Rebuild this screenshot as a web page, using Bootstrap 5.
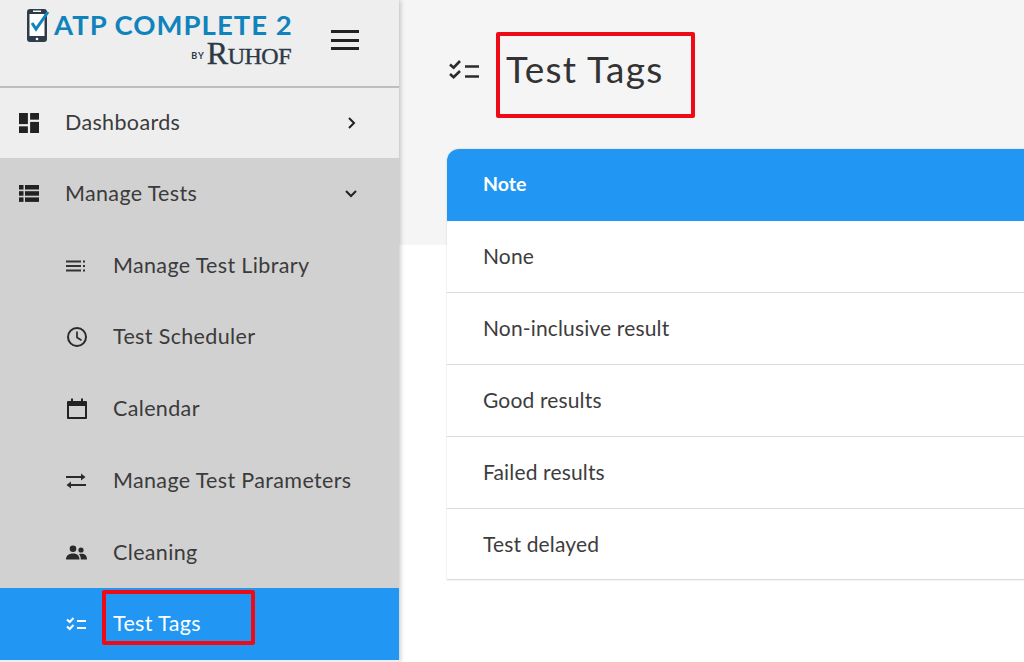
<!DOCTYPE html>
<html lang="en">
<head>
<meta charset="utf-8">
<title>Test Tags</title>
<link href="https://cdn.jsdelivr.net/npm/bootstrap@5.3.0/dist/css/bootstrap.min.css" rel="stylesheet">
<style>
html,body{height:100%;overflow:hidden}
body{font-family:"Lato","Noto Sans",sans-serif;color:#333;background:#fff;width:1024px;height:662px;position:relative}
.shell{height:662px}
.side{width:399px;flex:none;background:#eee;box-shadow:1px 0 5px rgba(0,0,0,.25);z-index:2;height:662px;overflow:hidden}
.brandbar{height:88px;flex:none;border-bottom:2px solid #bdbdbd;padding-left:24px;padding-right:40px}
.brandmark{margin-top:7px;width:272px}
.logotop{font-weight:700;font-size:27.5px;line-height:28px;color:#1083bd;letter-spacing:1px;white-space:nowrap;margin-left:2px}
.logotop svg{margin-right:1px}
.logosub{color:#2c3a47;line-height:20px;padding-right:5px;justify-content:flex-end;white-space:nowrap}
.by{font-size:9px;font-weight:700;letter-spacing:1px;margin-right:2px;margin-top:3px}
.ruhof{font-family:"Liberation Serif",serif;font-size:24px;font-weight:400;letter-spacing:-.5px;-webkit-text-stroke:.4px #2c3a47}
.ruhof b{font-size:32px;font-weight:400}
.burger{width:28px;height:20px;border-top:3px solid #222;border-bottom:3px solid #222;position:relative;margin-top:-6px;background:linear-gradient(#222,#222) center/100% 3px no-repeat}
.menurow{height:71.7px;flex:none;font-size:21.5px;letter-spacing:.35px;color:#3b3b3b;padding-left:19px;padding-right:41px;white-space:nowrap;line-height:1}
.firstrow{height:70px}
.menurow .glyph{width:46px;flex:none;display:flex;align-items:center}
.subrow{padding-left:66px}
.subrow .glyph{width:47px}
.tier{background:#d1d1d1;flex:none}
.isactive{background:#2196f3;color:#fff;height:72px}
.mainpane{flex:1;min-width:0;background:linear-gradient(#f5f5f5 245px,#fff 245px);padding-left:48px;overflow:hidden}
.headline{height:149px;padding-bottom:8px}
.headline svg{margin-left:2px}
.headline h1{font-size:37px;font-weight:400;color:#333;margin:-2px 0 0 26px;letter-spacing:1.3px}
.tagbox{width:640px;background:#fff;border-radius:12px 0 0 0;overflow:hidden;box-shadow:0 0 2px rgba(0,0,0,.18)}
.taghead{height:72px;background:#2196f3;color:#fff;font-size:19.5px;font-weight:700;padding-left:36px;padding-bottom:2px}
.tagrow{height:71.9px;padding-left:36px;padding-bottom:1px;font-size:21px;letter-spacing:.15px;color:#3d3d3d;border-bottom:1px solid #dcdcdc}
.annot{position:absolute;border:4px solid #ef0b16;border-radius:2px;z-index:5;pointer-events:none}
.annot-a{left:496px;top:32px;width:199px;height:86px}
.annot-b{left:102px;top:590px;width:153px;height:55px}
svg{display:block}
</style>
</head>
<body>
<div class="d-flex shell">
  <aside class="side d-flex flex-column">
    <div class="brandbar d-flex justify-content-between align-items-center">
      <div class="d-flex align-self-start brandmark">
        <div class="flex-grow-1">
          <div class="logotop d-flex align-items-center">
            <svg width="27" height="36" viewBox="0 0 27 36"><rect x="1" y="2" width="20" height="33" rx="3" fill="#2f3d4b"/><rect x="3.500" y="7" width="15" height="22" fill="#fff"/><circle cx="11" cy="32" r="1.300" fill="#fff"/><rect x="7" y="3.500" width="8" height="1.500" fill="#fff"/><path d="M6 16l4 6L22 5" fill="none" stroke="#1083bd" stroke-width="3"/></svg>
            <span>ATP COMPLETE 2</span>
          </div>
          <div class="logosub d-flex align-items-center"><span class="by">BY</span><span class="ruhof"><b>R</b>UHOF</span></div>
        </div>
      </div>
      <div class="burger"></div>
    </div>

    <div class="menurow firstrow d-flex align-items-center">
      <span class="glyph"><svg width="20" height="20" viewBox="0 0 18 18" fill="#222"><rect x="0" y="0" width="8" height="10"/><rect x="0" y="12" width="8" height="6"/><rect x="10" y="0" width="8" height="6"/><rect x="10" y="8" width="8" height="10"/></svg></span>
      <span class="flex-grow-1">Dashboards</span>
      <svg width="12" height="14" viewBox="0 0 12 14"><path d="M3 2l5 5-5 5" fill="none" stroke="#222" stroke-width="2"/></svg>
    </div>

    <div class="tier">
      <div class="menurow d-flex align-items-center">
        <span class="glyph"><svg width="20" height="17" viewBox="0 0 20 17" fill="#222"><rect x="0" y="0" width="4.500" height="4.500"/><rect x="6" y="0" width="14" height="4.500"/><rect x="0" y="6.200" width="4.500" height="4.500"/><rect x="6" y="6.200" width="14" height="4.500"/><rect x="0" y="12.400" width="4.500" height="4.500"/><rect x="6" y="12.400" width="14" height="4.500"/></svg></span>
        <span class="flex-grow-1">Manage Tests</span>
        <svg width="14" height="12" viewBox="0 0 14 12"><path d="M2 3l5 5 5-5" fill="none" stroke="#222" stroke-width="2"/></svg>
      </div>
      <div class="menurow subrow d-flex align-items-center">
        <span class="glyph"><svg width="20" height="12" viewBox="0 0 20 12" fill="#333"><rect y="0.500" width="15" height="2"/><rect y="5" width="15" height="2"/><rect y="9.500" width="15" height="2"/><rect x="17" y="0.500" width="2" height="2"/><rect x="17" y="5" width="2" height="2"/><rect x="17" y="9.500" width="2" height="2"/></svg></span>
        <span>Manage Test Library</span>
      </div>
      <div class="menurow subrow d-flex align-items-center">
        <span class="glyph"><svg width="22" height="22" viewBox="0 0 22 22" fill="none" stroke="#2a2a2a" stroke-width="2"><circle cx="11" cy="11" r="9"/><path d="M11 5.500V11.500l4.500 2.700" stroke-width="1.700"/></svg></span>
        <span>Test Scheduler</span>
      </div>
      <div class="menurow subrow d-flex align-items-center">
        <span class="glyph"><svg width="22" height="22" viewBox="0 0 22 22"><path d="M2 3h18a1 1 0 0 1 1 1v16a1 1 0 0 1-1 1H2a1 1 0 0 1-1-1V4a1 1 0 0 1 1-1z" fill="#222"/><rect x="3" y="8" width="16" height="11" fill="#d1d1d1"/><rect x="5" y="0.500" width="2" height="3" fill="#222"/><rect x="15" y="0.500" width="2" height="3" fill="#222"/></svg></span>
        <span>Calendar</span>
      </div>
      <div class="menurow subrow d-flex align-items-center">
        <span class="glyph"><svg width="20" height="16" viewBox="0 0 20 16" fill="#2a2a2a"><path d="M0 3.100h15V0.500L19.500 4 15 7.500V4.900H0zM20 12.900H5v2.600L.5 12 5 8.500v2.600h15z"/></svg></span>
        <span>Manage Test Parameters</span>
      </div>
      <div class="menurow subrow d-flex align-items-center">
        <span class="glyph"><svg width="21" height="15" viewBox="0 0 21 15" fill="#2a2a2a"><circle cx="7" cy="3.800" r="3.300"/><circle cx="15" cy="5" r="2.600"/><path d="M0 14.500c0-4 3-6 7-6s6.500 2 6.500 6zM14.800 14.500c0-2.300-.6-4-1.800-5.200 3.800-1.200 8-.1 8 5.200z"/></svg></span>
        <span>Cleaning</span>
      </div>
    </div>

    <div class="menurow subrow isactive text-white d-flex align-items-center">
      <span class="glyph"><svg width="21" height="14" viewBox="0 0 21 14" fill="none" stroke="#fff" stroke-width="2"><path d="M1 2.500l2.700 2.500L7.500 1M1 9.500l2.700 2.500 3.800-4"/><path d="M11 4h9M11 11h9"/></svg></span>
      <span>Test Tags</span>
    </div>
  </aside>

  <main class="mainpane">
    <div class="headline d-flex align-items-center">
      <svg width="31" height="21" viewBox="0 0 31 21" fill="none" stroke="#2b2b2b" stroke-width="2.600"><path d="M1 4.500l3.600 3.200L11 1M1 14l3.600 3.200L11 11"/><path d="M16 6.500h14M16 16.500h14"/></svg>
      <h1>Test Tags</h1>
    </div>
    <div class="tagbox">
      <div class="taghead d-flex align-items-center">Note</div>
      <div class="tagrow d-flex align-items-center">None</div>
      <div class="tagrow d-flex align-items-center">Non-inclusive result</div>
      <div class="tagrow d-flex align-items-center">Good results</div>
      <div class="tagrow d-flex align-items-center">Failed results</div>
      <div class="tagrow d-flex align-items-center">Test delayed</div>
    </div>
  </main>
</div>
<div class="annot annot-a"></div>
<div class="annot annot-b"></div>
</body>
</html>
